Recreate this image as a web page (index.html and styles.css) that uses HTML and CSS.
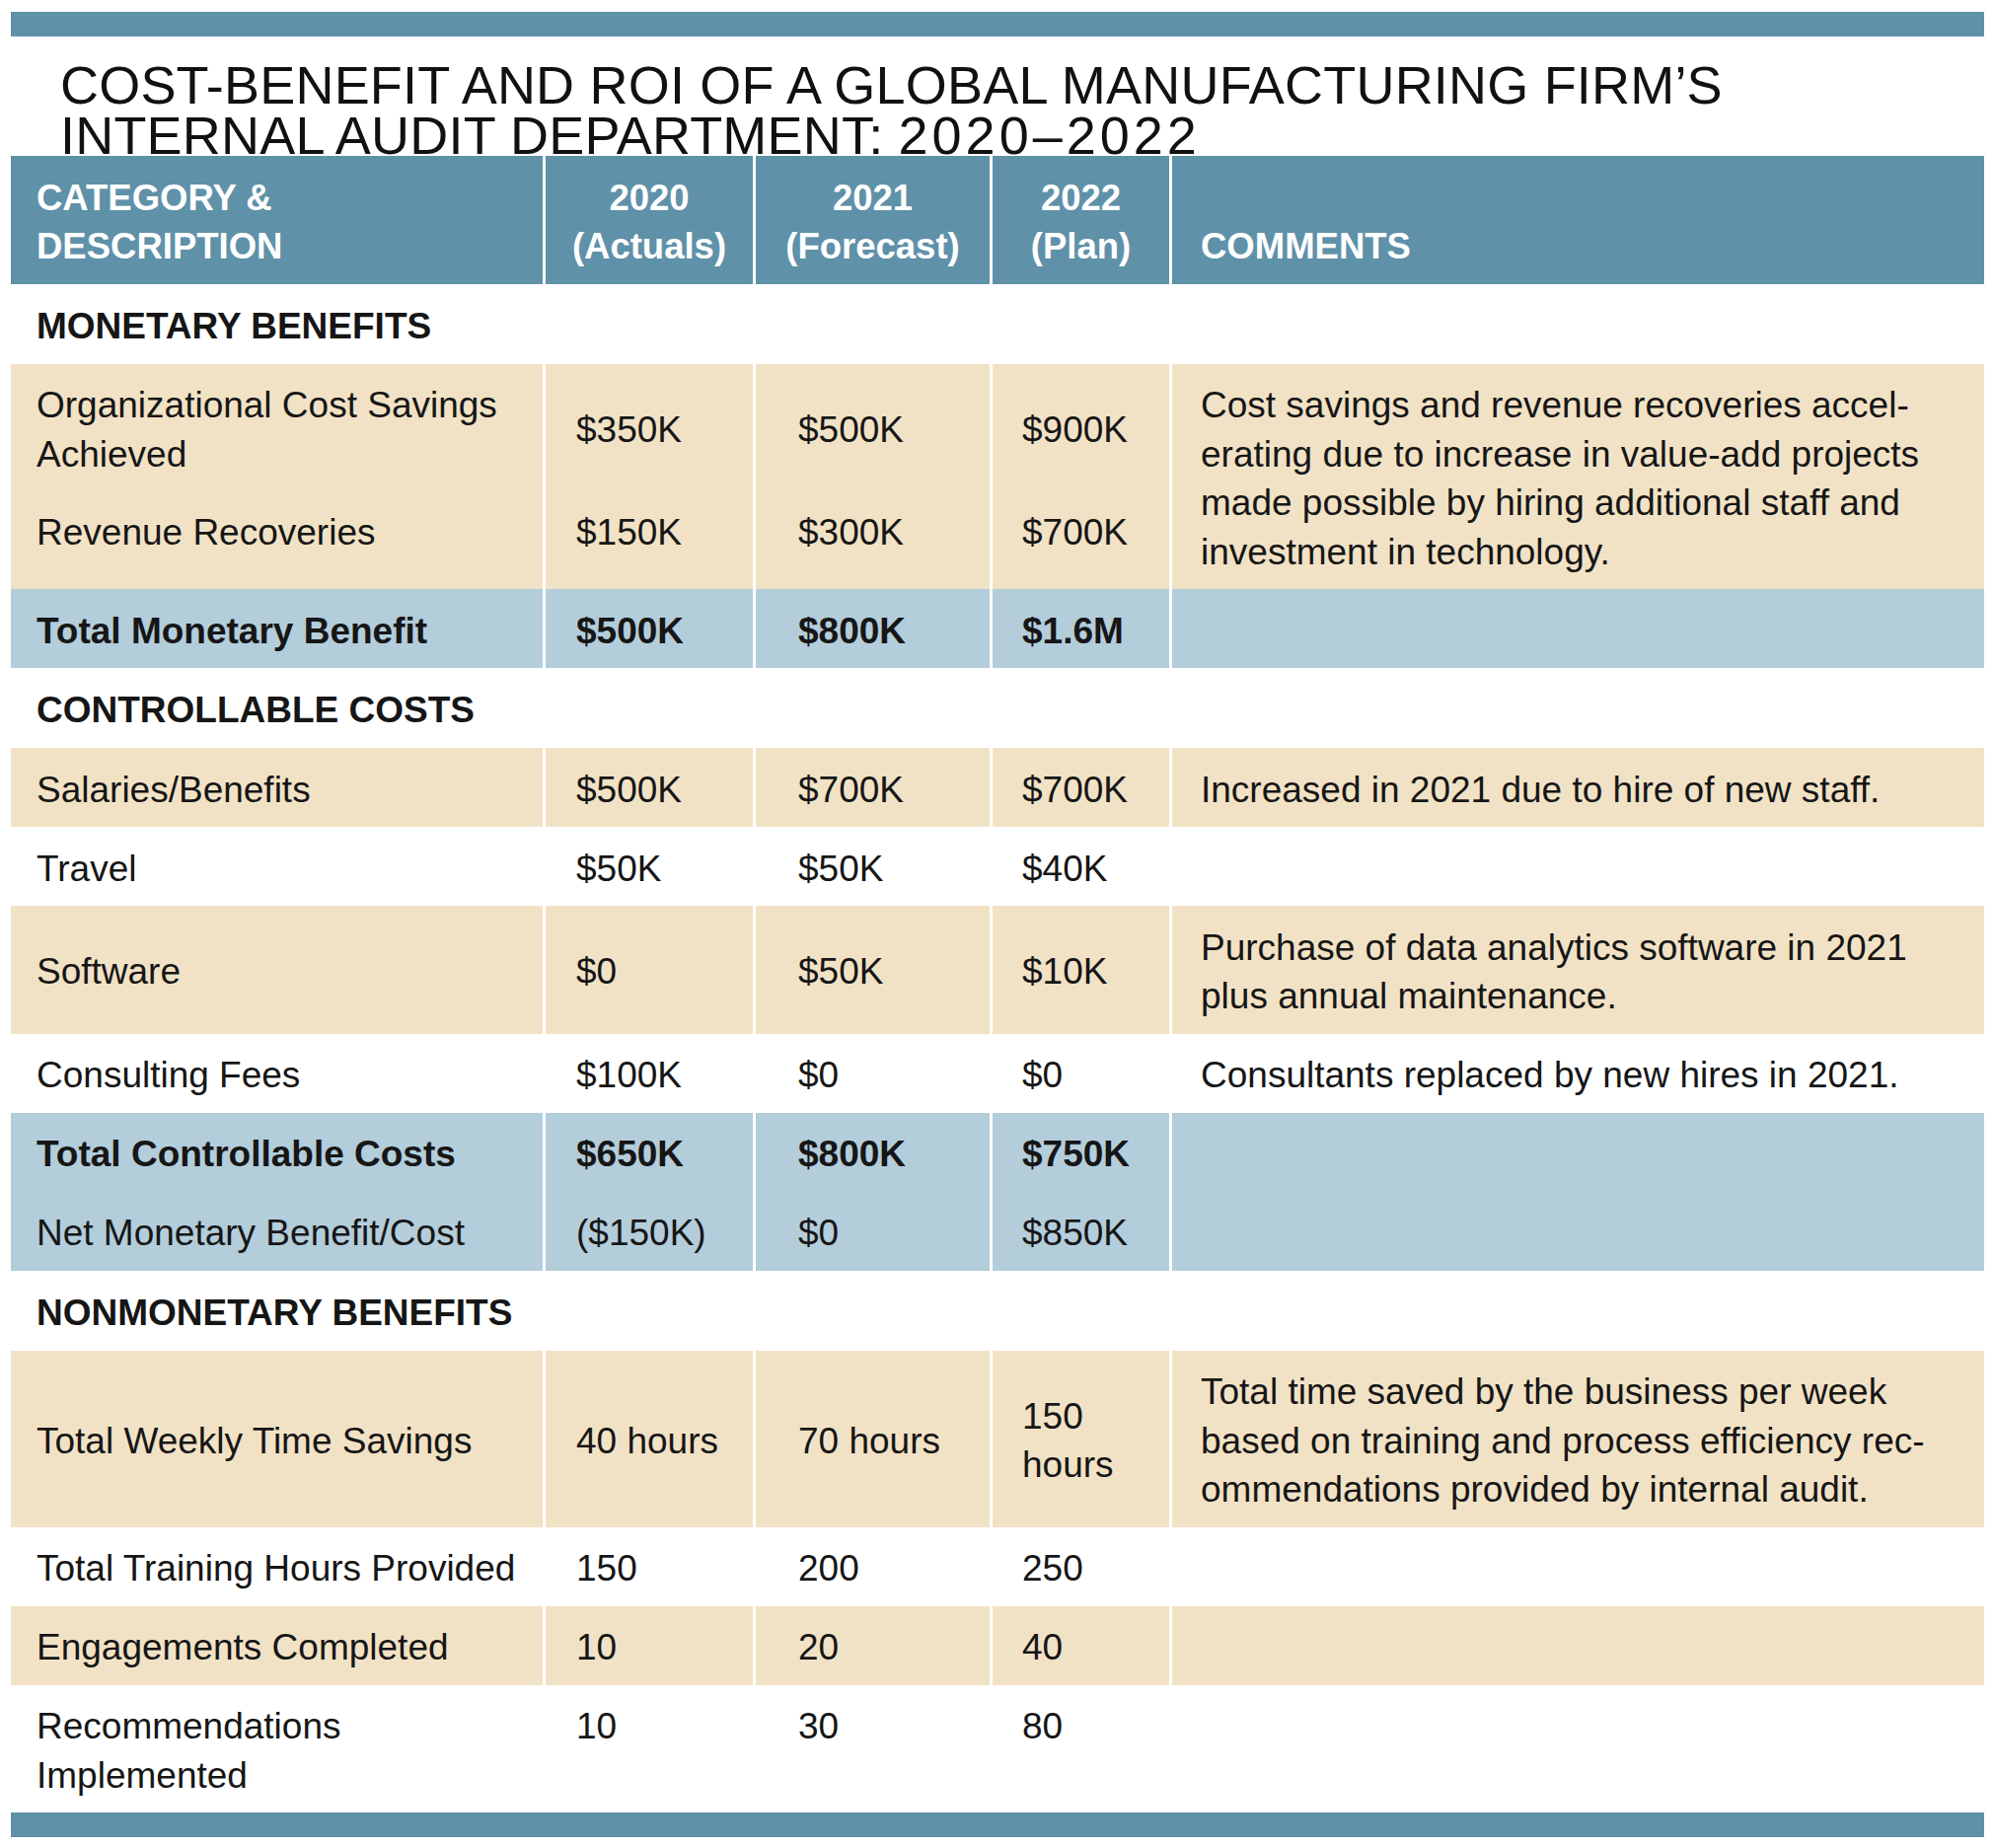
FILE: index.html
```html
<!DOCTYPE html>
<html lang="en">
<head>
<meta charset="utf-8">
<title>Cost-Benefit and ROI</title>
<link rel="stylesheet" href="styles.css">
</head>
<body>
<div class="page">
  <div class="bar"></div>
  <h1 class="title"><span class="tline">COST-BENEFIT AND ROI OF A GLOBAL MANUFACTURING FIRM’S</span><span class="tline">INTERNAL AUDIT DEPARTMENT: <span class="years">2020–2022</span></span></h1>

  <div class="row head">
    <div class="cell c1">CATEGORY &amp;<br>DESCRIPTION</div>
    <div class="cell c2">2020<br>(Actuals)</div>
    <div class="cell c3">2021<br>(Forecast)</div>
    <div class="cell c4">2022<br>(Plan)</div>
    <div class="cell c5">COMMENTS</div>
  </div>

  <div class="section">MONETARY BENEFITS</div>

  <div class="row beige group">
    <div class="cell c1">
      <div class="sub first">Organizational Cost Savings Achieved</div>
      <div class="sub">Revenue Recoveries</div>
    </div>
    <div class="cell c2">
      <div class="sub first">$350K</div>
      <div class="sub">$150K</div>
    </div>
    <div class="cell c3">
      <div class="sub first">$500K</div>
      <div class="sub">$300K</div>
    </div>
    <div class="cell c4">
      <div class="sub first">$900K</div>
      <div class="sub">$700K</div>
    </div>
    <div class="cell c5">Cost savings and revenue recoveries accel-<br>erating due to increase in value-add projects<br>made possible by hiring additional staff and<br>investment in technology.</div>
  </div>

  <div class="row blue bold">
    <div class="cell c1">Total Monetary Benefit</div>
    <div class="cell c2">$500K</div>
    <div class="cell c3">$800K</div>
    <div class="cell c4">$1.6M</div>
    <div class="cell c5"></div>
  </div>

  <div class="section">CONTROLLABLE COSTS</div>

  <div class="row beige">
    <div class="cell c1">Salaries/Benefits</div>
    <div class="cell c2">$500K</div>
    <div class="cell c3">$700K</div>
    <div class="cell c4">$700K</div>
    <div class="cell c5">Increased in 2021 due to hire of new staff.</div>
  </div>

  <div class="row">
    <div class="cell c1">Travel</div>
    <div class="cell c2">$50K</div>
    <div class="cell c3">$50K</div>
    <div class="cell c4">$40K</div>
    <div class="cell c5"></div>
  </div>

  <div class="row beige">
    <div class="cell c1">Software</div>
    <div class="cell c2">$0</div>
    <div class="cell c3">$50K</div>
    <div class="cell c4">$10K</div>
    <div class="cell c5">Purchase of data analytics software in 2021<br>plus annual maintenance.</div>
  </div>

  <div class="row">
    <div class="cell c1">Consulting Fees</div>
    <div class="cell c2">$100K</div>
    <div class="cell c3">$0</div>
    <div class="cell c4">$0</div>
    <div class="cell c5">Consultants replaced by new hires in 2021.</div>
  </div>

  <div class="row blue bold">
    <div class="cell c1">Total Controllable Costs</div>
    <div class="cell c2">$650K</div>
    <div class="cell c3">$800K</div>
    <div class="cell c4">$750K</div>
    <div class="cell c5"></div>
  </div>

  <div class="row blue">
    <div class="cell c1">Net Monetary Benefit/Cost</div>
    <div class="cell c2">($150K)</div>
    <div class="cell c3">$0</div>
    <div class="cell c4">$850K</div>
    <div class="cell c5"></div>
  </div>

  <div class="section">NONMONETARY BENEFITS</div>

  <div class="row beige">
    <div class="cell c1">Total Weekly Time Savings</div>
    <div class="cell c2">40 hours</div>
    <div class="cell c3">70 hours</div>
    <div class="cell c4">150 hours</div>
    <div class="cell c5">Total time saved by the business per week<br>based on training and process efficiency rec-<br>ommendations provided by internal audit.</div>
  </div>

  <div class="row">
    <div class="cell c1">Total Training Hours Provided</div>
    <div class="cell c2">150</div>
    <div class="cell c3">200</div>
    <div class="cell c4">250</div>
    <div class="cell c5"></div>
  </div>

  <div class="row beige">
    <div class="cell c1">Engagements Completed</div>
    <div class="cell c2">10</div>
    <div class="cell c3">20</div>
    <div class="cell c4">40</div>
    <div class="cell c5"></div>
  </div>

  <div class="row top">
    <div class="cell c1">Recommendations Implemented</div>
    <div class="cell c2">10</div>
    <div class="cell c3">30</div>
    <div class="cell c4">80</div>
    <div class="cell c5"></div>
  </div>

  <div class="bar"></div>
</div>
</body>
</html>
```

FILE: styles.css
```css
html, body {
  margin: 0;
  padding: 0;
  background: #ffffff;
}

.page {
  width: 2000px;
  padding: 12px 0 0 11px;
  font-family: "Liberation Sans", Arial, sans-serif;
  color: #161616;
  font-size: 37px;
}

.bar {
  height: 25px;
  background: #5f91a9;
}

.title {
  margin: 24px 0 -5px 0;
  padding-left: 50px;
  font-size: 54px;
  font-weight: normal;
  line-height: 51px;
  color: #111111;
  position: relative;
  z-index: 0;
}

.tline {
  display: block;
  height: 51px;
  letter-spacing: 0.2px;
}

.years {
  letter-spacing: 4px;
}

.row {
  display: grid;
  grid-template-columns: 539px 210px 237px 179px 823px;
  column-gap: 3px;
  position: relative;
  z-index: 1;
}

.cell {
  padding: 17.5px 0 13px 0;
  line-height: 49.5px;
  display: flex;
  flex-direction: column;
  justify-content: center;
  min-width: 0;
}

.c1 { padding-left: 26px; }
.c2 { padding-left: 31px; }
.c3 { padding-left: 43px; }
.c4 { padding-left: 30px; }
.c5 { padding-left: 29px; }

.head .cell {
  background: #5f91a9;
  color: #ffffff;
  font-weight: bold;
  font-size: 36.5px;
  justify-content: flex-end;
}

.head .c2,
.head .c3,
.head .c4 {
  padding-left: 0;
  text-align: center;
}

.beige .cell {
  background: #f2e2c5;
}

.blue .cell {
  background: #b3cddb;
}

.bold .cell {
  font-weight: bold;
}

.top .cell {
  justify-content: flex-start;
}

.group .cell {
  justify-content: flex-start;
}

.group .sub.first {
  min-height: 99px;
  display: flex;
  align-items: center;
}

.group .sub + .sub {
  margin-top: 29.5px;
}

.section {
  padding: 18px 0 13.5px 26px;
  line-height: 49.5px;
  font-weight: bold;
  font-size: 37px;
}
```
